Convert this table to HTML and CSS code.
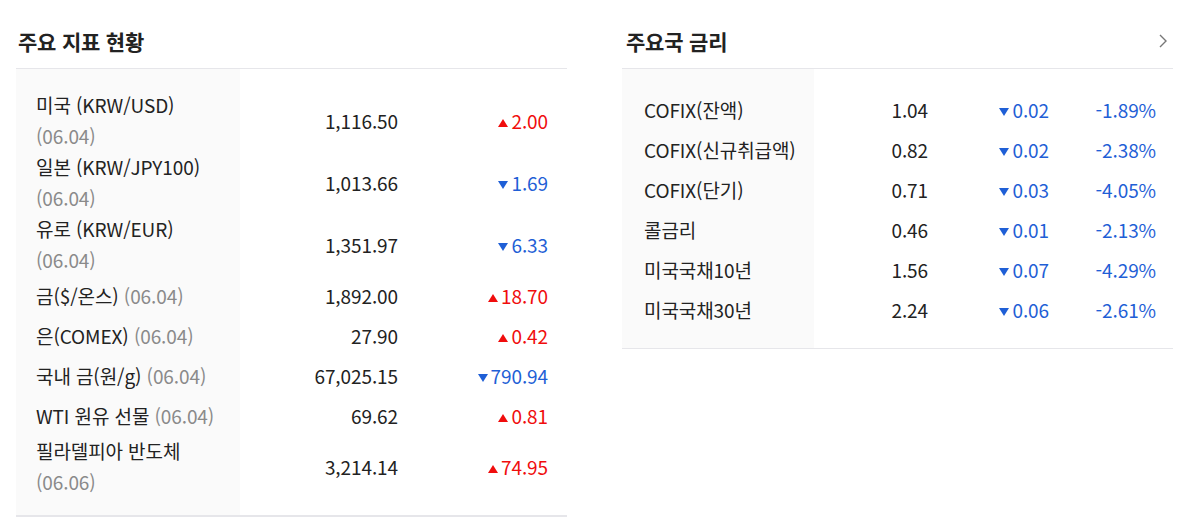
FILE: index.html
```html
<!DOCTYPE html>
<html lang="ko">
<head>
<meta charset="utf-8">
<title>주요 지표</title>
<link rel="stylesheet" href="styles.css">
</head>
<body>
<div class="page">
  <section class="panel panel-left">
    <div class="panel-head">
      <h2 class="panel-title">주요 지표 현황</h2>
    </div>
    <div class="table-wrap wrap-left">
      <table class="data data-left">
        <colgroup><col class="c-lname"><col class="c-lval"><col class="c-lchg"></colgroup>
        <tbody>
          <tr class="two"><td class="name">미국 (KRW/USD)<span class="date block">(06.04)</span></td><td class="num">1,116.50</td><td class="chg up"><i class="tri"></i>2.00</td></tr>
          <tr class="two"><td class="name">일본 (KRW/JPY100)<span class="date block">(06.04)</span></td><td class="num">1,013.66</td><td class="chg down"><i class="tri"></i>1.69</td></tr>
          <tr class="two"><td class="name">유로 (KRW/EUR)<span class="date block">(06.04)</span></td><td class="num">1,351.97</td><td class="chg down"><i class="tri"></i>6.33</td></tr>
          <tr><td class="name">금($/온스) <span class="date">(06.04)</span></td><td class="num">1,892.00</td><td class="chg up"><i class="tri"></i>18.70</td></tr>
          <tr><td class="name">은(COMEX) <span class="date">(06.04)</span></td><td class="num">27.90</td><td class="chg up"><i class="tri"></i>0.42</td></tr>
          <tr><td class="name">국내 금(원/g) <span class="date">(06.04)</span></td><td class="num">67,025.15</td><td class="chg down"><i class="tri"></i>790.94</td></tr>
          <tr><td class="name">WTI 원유 선물 <span class="date">(06.04)</span></td><td class="num">69.62</td><td class="chg up"><i class="tri"></i>0.81</td></tr>
          <tr class="two"><td class="name">필라델피아 반도체<span class="date block">(06.06)</span></td><td class="num">3,214.14</td><td class="chg up"><i class="tri"></i>74.95</td></tr>
        </tbody>
      </table>
    </div>
  </section>

  <section class="panel panel-right">
    <div class="panel-head">
      <h2 class="panel-title">주요국 금리</h2>
      <svg class="chev" width="10" height="16" viewBox="0 0 10 16"><polyline points="2,2 8,8 2,14" fill="none" stroke="#777" stroke-width="1.4"/></svg>
    </div>
    <div class="table-wrap wrap-right">
      <table class="data data-right">
        <colgroup><col class="c-rname"><col class="c-rval"><col class="c-rchg"><col class="c-rpct"></colgroup>
        <tbody>
          <tr><td class="name">COFIX(잔액)</td><td class="num">1.04</td><td class="chg down"><i class="tri"></i>0.02</td><td class="pct down">-1.89%</td></tr>
          <tr><td class="name">COFIX(신규취급액)</td><td class="num">0.82</td><td class="chg down"><i class="tri"></i>0.02</td><td class="pct down">-2.38%</td></tr>
          <tr><td class="name">COFIX(단기)</td><td class="num">0.71</td><td class="chg down"><i class="tri"></i>0.03</td><td class="pct down">-4.05%</td></tr>
          <tr><td class="name">콜금리</td><td class="num">0.46</td><td class="chg down"><i class="tri"></i>0.01</td><td class="pct down">-2.13%</td></tr>
          <tr><td class="name">미국국채10년</td><td class="num">1.56</td><td class="chg down"><i class="tri"></i>0.07</td><td class="pct down">-4.29%</td></tr>
          <tr><td class="name">미국국채30년</td><td class="num">2.24</td><td class="chg down"><i class="tri"></i>0.06</td><td class="pct down">-2.61%</td></tr>
        </tbody>
      </table>
    </div>
  </section>
</div>
</body>
</html>
```

FILE: styles.css
```css
html, body {
  margin: 0;
  padding: 0;
  background: #fff;
}
body {
  font-family: "Noto Sans CJK KR", "Noto Sans", sans-serif;
  color: #222;
  font-size: 19px;
}
.page {
  display: flex;
  gap: 55px;
  padding-left: 16px;
}
.panel {
  width: 551px;
}
.panel-head {
  box-sizing: border-box;
  height: 69px;
  padding: 14px 5px 0 2px;
  border-bottom: 1px solid #e6e6ea;
  display: flex;
  align-items: center;
  justify-content: space-between;
}
.panel-right .panel-head {
  padding-left: 4px;
}
.panel-title {
  margin: 0;
  font-size: 21px;
  font-weight: 700;
  letter-spacing: -0.2px;
  color: #222;
}
.table-wrap {
  padding: 20px 0;
}
.wrap-left {
  background: linear-gradient(to right, #fafafa 224px, #fff 224px);
  border-bottom: 2px solid #e6e6ea;
  padding-bottom: 18px;
}
.wrap-right {
  background: linear-gradient(to right, #fafafa 192px, #fff 192px);
  border-bottom: 1px solid #e6e6ea;
  padding-bottom: 19px;
}
.data {
  border-collapse: collapse;
  table-layout: fixed;
}
.data-left { width: 532px; }
.data-right { width: 534px; }
.data td {
  padding: 0;
  vertical-align: middle;
  white-space: nowrap;
}
.data tr {
  height: 40px;
}
.c-lname { width: 224px; }
.c-lval { width: 158px; }
.c-lchg { width: 150px; }
.c-rname { width: 192px; }
.c-rval { width: 114px; }
.c-rchg { width: 121px; }
.c-rpct { width: 107px; }
.name {
  padding-left: 20px !important;
  line-height: 31px;
  letter-spacing: -0.1px;
}
.wrap-right .name {
  padding-left: 22px !important;
}
.date {
  color: #8a8a8a;
}
.date.block {
  display: block;
}
.num, .chg, .pct {
  text-align: right;
  letter-spacing: -0.1px;
}
.up { color: #f00d0d; }
.down { color: #1f5fd6; }
.tri {
  display: inline-block;
  width: 0;
  height: 0;
  border-left: 5px solid transparent;
  border-right: 5px solid transparent;
  margin-right: 3px;
  vertical-align: 2px;
}
.up .tri {
  border-bottom: 8px solid #f00d0d;
}
.down .tri {
  border-top: 8px solid #1f5fd6;
}
```
